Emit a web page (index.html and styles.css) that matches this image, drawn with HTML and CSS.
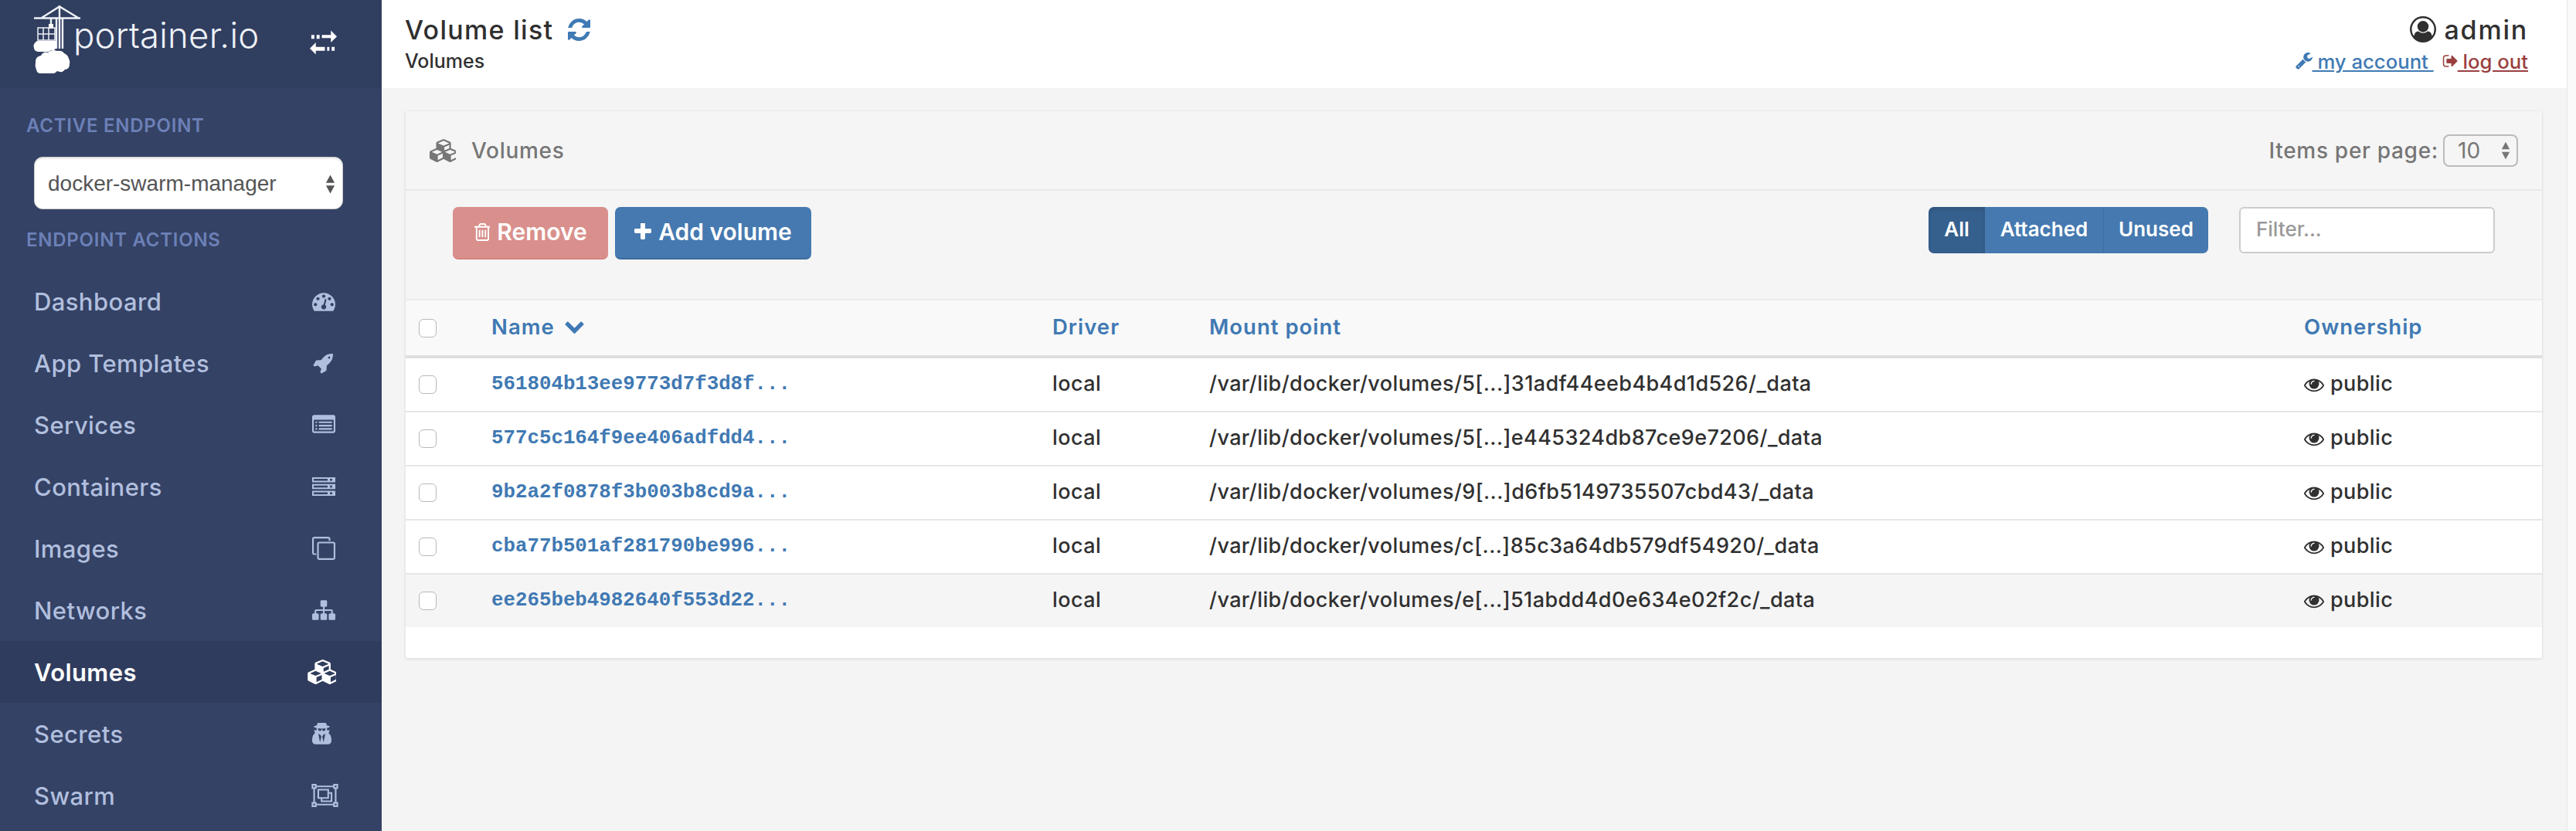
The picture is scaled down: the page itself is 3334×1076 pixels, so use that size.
FILE: index.html
```html
<!DOCTYPE html>
<html lang="en">
<head>
<meta charset="utf-8">
<title>Volume list</title>
<link rel="stylesheet" href="styles.css">
</head>
<body>
<svg class="defs" width="0" height="0" aria-hidden="true">
  <defs>
    <symbol id="i-cubes" viewBox="0 0 2048 1792"><path d="M640 1632l384-192v-314l-384 164v342zm-64-454l404-173-404-173-404 173zm1088 454l384-192v-314l-384 164v342zm-64-454l404-173-404-173-404 173zm-448-293l384-165v-266l-384 164v267zm-64-379l441-189-441-189-441 189zm1088 518v416q0 36-19 67t-52 47l-448 224q-25 14-57 14t-57-14l-448-224q-5-2-7-4-2 2-7 4l-448 224q-25 14-57 14t-57-14l-448-224q-33-16-52-47t-19-67v-416q0-38 21.5-70t56.5-48l434-186v-400q0-38 21.5-70t56.5-48l448-192q23-10 50-10t50 10l448 192q35 16 56.5 48t21.5 70v400l434 186q36 16 57 48t21 70z"/></symbol>
    <symbol id="i-eye" viewBox="0 0 1792 1792"><path d="M1664 960q-152-236-381-353 61 104 61 225 0 185-131.5 316.5t-316.5 131.5-316.5-131.5-131.5-316.5q0-121 61-225-229 117-381 353 133 205 333.5 326.5t434.5 121.5 434.5-121.5 333.5-326.5zm-720-384q0-20-14-34t-34-14q-125 0-214.5 89.5t-89.5 214.5q0 20 14 34t34 14 34-14 14-34q0-86 61-147t147-61q20 0 34-14t14-34zm848 384q0 34-20 69-140 230-376.5 368.5t-499.5 138.5-499.5-139-376.5-368q-20-35-20-69t20-69q140-229 376.5-368t499.5-139 499.5 139 376.5 368q20 35 20 69z"/></symbol>
  </defs>
</svg>
<aside class="sidebar">
  <div class="brand">
    <svg class="logo" viewBox="0 0 66 90" aria-hidden="true">
      <g class="logo-lines">
        <path d="M1 18.500h60M11 18l23-14.500L58 18M34 2v56M30 18v40M38 18v40M23 18v9"/>
        <path class="thin" d="M6 31h22v16H6zM13 31v16M20 31v16M6 39h22"/>
      </g>
      <rect class="logo-fill" x="20" y="26" width="6" height="6"/>
      <path class="logo-fill" d="M5 48h24q2 5 0 10-2 3-6 2l-3 2-14 0q-5-1-5-5-2-5 4-9z"/>
      <path class="logo-fill" d="M3 75q0-7 7-8 3-6 9-4 5-5 12-2 6-1 9 3 5 2 6 7 2 3 1 7 0 7-6 7-3 5-10 2-4 5-11 3-4 3-8 0-7 1-8-5-2-4-1-8z"/>
    </svg>
    <span class="brand-name">portainer.io</span>
    <svg class="toggle" viewBox="0 0 38 32" aria-hidden="true"><path d="M3 6h4v5H3zM10 6h4v5h-4zM17 6h12V0l8 8-8 8v-6H17zM1 24l8-8v6h12v5H9v5zM24 22h3v5h-3zM30 22h4v5h-4z"/></svg>
  </div>
  <div class="section-label section-active">ACTIVE ENDPOINT</div>
  <div class="endpoint">
    <span>docker-swarm-manager</span>
    <svg class="updown" viewBox="0 0 14 26" aria-hidden="true"><path d="M7 0l6 11H1zM7 26l-6-11h12z"/></svg>
  </div>
  <div class="section-label section-actions">ENDPOINT ACTIONS</div>
  <nav class="nav">
    <a class="nav-item"><span>Dashboard</span><svg class="nav-icon" viewBox="0 0 1792 1536"><path transform="translate(0 -128)" d="M384 1152q0-53-37.500-90.500t-90.500-37.500-90.500 37.500-37.500 90.500 37.500 90.500 90.500 37.500 90.500-37.500 37.500-90.500zm192-448q0-53-37.500-90.500t-90.500-37.500-90.500 37.500-37.500 90.500 37.500 90.500 90.500 37.500 90.500-37.500 37.500-90.500zm428 481l101-382q6-26-7.500-48.500t-38.500-29.500-48 6.500-30 39.500l-101 382q-60 5-107 43.500t-63 98.500q-20 77 20 146t117 89 146-20 89-117q16-60-6-117t-72-91zm660-33q0-53-37.500-90.500t-90.500-37.500-90.500 37.500-37.500 90.500 37.500 90.500 90.500 37.500 90.500-37.500 37.500-90.500zm-640-640q0-53-37.500-90.500t-90.500-37.500-90.500 37.500-37.500 90.500 37.500 90.500 90.500 37.500 90.500-37.500 37.500-90.500zm448 192q0-53-37.500-90.500t-90.500-37.500-90.500 37.500-37.500 90.500 37.500 90.500 90.500 37.500 90.500-37.500 37.500-90.500zm320 448q0 261-141 483-19 29-54 29h-1402q-35 0-54-29-141-221-141-483 0-182 71-348t191-286 286-191 348-71 348 71 286 191 191 286 71 348z"/></svg></a>
    <a class="nav-item"><span>App Templates</span><svg class="nav-icon icon-rocket" viewBox="0 0 1792 1792"><path d="M1504 448q0-40-28-68t-68-28-68 28-28 68 28 68 68 28 68-28 28-68zm224-288q0 249-75.500 430.500t-253.500 360.500q-81 80-195 176l-20 379q-2 16-16 26l-384 224q-7 4-16 4-12 0-23-9l-64-64q-13-14-8-32l85-276-281-281-276 85q-3 1-9 1-14 0-23-9l-64-64q-17-19-5-39l224-384q10-14 26-16l379-20q96-114 176-195 188-187 358-258t431-71q14 0 24 9.500t10 22.500z"/></svg></a>
    <a class="nav-item"><span>Services</span><svg class="nav-icon" viewBox="0 0 1792 1408"><path transform="translate(0 -192)" d="M384 1184v64q0 13-9.500 22.500t-22.500 9.500h-64q-13 0-22.500-9.500t-9.500-22.500v-64q0-13 9.500-22.500t22.500-9.500h64q13 0 22.500 9.500t9.500 22.500zm0-256v64q0 13-9.500 22.500t-22.500 9.500h-64q-13 0-22.500-9.500t-9.500-22.500v-64q0-13 9.500-22.500t22.500-9.500h64q13 0 22.500 9.500t9.500 22.500zm0-256v64q0 13-9.500 22.500t-22.500 9.500h-64q-13 0-22.500-9.500t-9.500-22.500v-64q0-13 9.500-22.500t22.500-9.500h64q13 0 22.500 9.500t9.500 22.500zm1152 512v64q0 13-9.500 22.500t-22.500 9.500h-960q-13 0-22.500-9.500t-9.500-22.500v-64q0-13 9.500-22.500t22.500-9.500h960q13 0 22.500 9.500t9.500 22.500zm0-256v64q0 13-9.500 22.500t-22.500 9.500h-960q-13 0-22.500-9.500t-9.500-22.500v-64q0-13 9.500-22.500t22.500-9.500h960q13 0 22.500 9.500t9.500 22.500zm0-256v64q0 13-9.500 22.500t-22.500 9.500h-960q-13 0-22.500-9.500t-9.500-22.500v-64q0-13 9.500-22.500t22.500-9.500h960q13 0 22.500 9.500t9.500 22.500zm128 704v-832q0-13-9.500-22.500t-22.500-9.500h-1472q-13 0-22.500 9.500t-9.500 22.500v832q0 13 9.500 22.500t22.500 9.500h1472q13 0 22.500-9.500t9.500-22.500zm128-1088v1088q0 66-47 113t-113 47h-1472q-66 0-113-47t-47-113v-1088q0-66 47-113t113-47h1472q66 0 113 47t47 113z"/></svg></a>
    <a class="nav-item"><span>Containers</span><svg class="nav-icon icon-server" viewBox="0 0 30 24"><path fill-rule="evenodd" d="M0 0h30v6.500H0zM2 2v2.500h18V2zM23 2v2.500h3V2zM0 8.750h30v6.500H0zM2 10.750v2.500h18v-2.500zM23 10.750v2.500h3v-2.500zM0 17.500h30V24H0zM2 19.500V22h18v-2.500zM23 19.500V22h3v-2.500z"/></svg></a>
    <a class="nav-item"><span>Images</span><svg class="nav-icon icon-clone" viewBox="0 0 1792 1792"><path d="M1664 1632v-1088q0-13-9.500-22.500t-22.500-9.500h-1088q-13 0-22.500 9.500t-9.500 22.500v1088q0 13 9.500 22.500t22.500 9.500h1088q13 0 22.500-9.500t9.500-22.500zm128-1088v1088q0 66-47 113t-113 47h-1088q-66 0-113-47t-47-113v-1088q0-66 47-113t113-47h1088q66 0 113 47t47 113zm-384-384v160h-128v-160q0-13-9.500-22.500t-22.500-9.500h-1088q-13 0-22.500 9.500t-9.500 22.500v1088q0 13 9.500 22.500t22.500 9.500h160v128h-160q-66 0-113-47t-47-113v-1088q0-66 47-113t113-47h1088q66 0 113 47t47 113z"/></svg></a>
    <a class="nav-item"><span>Networks</span><svg class="nav-icon" viewBox="0 0 1792 1536"><path transform="translate(0 -128)" d="M1792 1248v320q0 40-28 68t-68 28h-320q-40 0-68-28t-28-68v-320q0-40 28-68t68-28h96v-192h-512v192h96q40 0 68 28t28 68v320q0 40-28 68t-68 28h-320q-40 0-68-28t-28-68v-320q0-40 28-68t68-28h96v-192h-512v192h96q40 0 68 28t28 68v320q0 40-28 68t-68 28h-320q-40 0-68-28t-28-68v-320q0-40 28-68t68-28h96v-192q0-52 38-90t90-38h512v-192h-96q-40 0-68-28t-28-68v-320q0-40 28-68t68-28h320q40 0 68 28t28 68v320q0 40-28 68t-68 28h-96v192h512q52 0 90 38t38 90v192h96q40 0 68 28t28 68z"/></svg></a>
    <a class="nav-item nav-active"><span>Volumes</span><svg class="nav-icon icon-cubes"><use href="#i-cubes"/></svg></a>
    <a class="nav-item"><span>Secrets</span><svg class="nav-icon icon-secret" viewBox="0 128 1408 1536"><path d="M576 1536l96-448-96-128-128-64zm256 0l128-640-128 64-96 128zm160-1010q-2-4-4-6-10-8-96-8-70 0-167 19-7 2-21 2t-21-2q-97-19-167-19-86 0-96 8-2 2-4 6 2 18 4 27 2 3 7.500 6.500t7.500 10.500q2 4 7.500 20.500t7 20.500 7.500 17 8.500 17 9 14 12 13.500 14 9.500 17.500 8 20.500 4 24.500 2q36 0 59-12.500t32.500-30 14.500-34.500 11.500-29.500 17.500-12.500h12q11 0 17.500 12.500t11.500 29.500 14.500 34.500 32.500 30 59 12.500q13 0 24.500-2t20.500-4 17.500-8 14-9.500 12-13.500 9-14 8.500-17 7.500-17 7-20.500 7.500-20.500q2-7 7.500-10.500t7.500-6.500q2-9 4-27zm416 879q0 121-73 190t-194 69h-874q-121 0-194-69t-73-190q0-61 4.500-118t19-125.500 37.500-123.500 63.500-103.500 93.500-74.500l-90-220h214q-22-64-22-128 0-12 2-32-194-40-194-96 0-57 210-99 17-62 51.500-134t70.500-114q32-37 76-37 30 0 84 31t84 31 84-31 84-31q44 0 76 36 36 42 70.500 114t51.500 135q210 42 210 99 0 56-194 96 7 81-20 160h214l-82 225q63 33 107.500 96.500t65.500 143.500 29 151.500 8 148.500z"/></svg></a>
    <a class="nav-item"><span>Swarm</span><svg class="nav-icon icon-swarm" viewBox="0 0 2048 1792"><path fill-rule="evenodd" d="M0 0h384v128h1280V0h384v384h-128v1024h128v384h-384v-128H384v128H0v-384h128V384H0zM128 128v128h128V128zM1792 128v128h128V128zM128 1536v128h128v-128zM1792 1536v128h128v-128zM384 256v128H256v1024h128v128h1280v-128h128V384h-128V256zM448 384h896v256h256v768H704v-256H448zM576 512v512h640V512zM1344 768v384H832v128h640V768z"/></svg></a>
  </nav>
</aside>
<main class="main">
  <header class="topbar">
    <div class="page-title">
      <div class="title-row">
        <span class="title">Volume list</span>
        <svg class="refresh" viewBox="128 128 1536 1536" aria-hidden="true"><path d="M1639 1056q0 5-1 7-64 268-268 434.500t-478 166.500q-146 0-282.500-55t-243.500-157l-129 129q-19 19-45 19t-45-19-19-45v-448q0-26 19-45t45-19h448q26 0 45 19t19 45-19 45l-137 137q71 66 161 102t187 36q134 0 250-65t186-179q11-17 53-117 8-23 30-23h192q13 0 22.500 9.500t9.500 22.500zm25-800v448q0 26-19 45t-45 19h-448q-26 0-45-19t-19-45 19-45l138-138q-148-137-349-137-134 0-250 65t-186 179q-11 17-53 117-8 23-30 23h-199q-13 0-22.500-9.500t-9.500-22.500v-7q65-268 270-434.500t480-166.500q146 0 284 55.500t245 156.500l130-129q19-19 45-19t45 19 19 45z"/></svg>
      </div>
      <div class="crumb">Volumes</div>
    </div>
    <div class="user">
      <div class="user-name">
        <svg class="user-icon" viewBox="0 0 1792 1792" aria-hidden="true"><path d="M896 0q182 0 348 71t286 191 191 286 71 348q0 181-70.500 347t-190.500 286-286 191.500-349 71.500-349-71-285.500-191.500-190.500-286-71-347.500 71-348 191-286 286-191 348-71zm619 1351q149-205 149-455 0-156-61-298t-164-245-245-164-298-61-298 61-245 164-164 245-61 298q0 250 149 455 66-327 306-327 131 128 313 128t313-128q240 0 306 327zm-235-647q0-159-112.500-271.500t-271.500-112.500-271.500 112.500-112.500 271.500 112.500 271.500 271.500 112.500 271.500-112.500 112.500-271.500z"/></svg>
        <span>admin</span>
      </div>
      <div class="user-links">
        <svg class="wrench" viewBox="64 128 1664 1664" aria-hidden="true"><path d="M448 1472q0-26-19-45t-45-19-45 19-19 45 19 45 45 19 45-19 19-45zm644-420l-682 682q-37 37-90 37-52 0-91-37l-106-108q-38-36-38-90 0-53 38-91l681-681q39 98 114.500 173.500t173.500 114.500zm634-435q0 39-23 106-47 134-164.500 217.500t-258.500 83.500q-185 0-316.500-131.500t-131.500-316.500 131.500-316.500 316.500-131.500q58 0 121.500 16.500t107.500 46.500q16 11 16 28t-16 28l-293 169v224l193 107q5-3 79-48.500t135.500-81 70.500-35.500q15 0 23.500 10t8.500 25z"/></svg>
        <a class="link-account">&nbsp;my account&nbsp;</a>
        <svg class="signout" viewBox="0 256 1664 1280" aria-hidden="true"><path d="M704 1440q0 4 1 20t.5 26.500-3 23.500-10 19.500-20.500 6.500h-320q-119 0-203.500-84.500t-84.500-203.500v-704q0-119 84.500-203.500t203.500-84.500h320q13 0 22.500 9.500t9.500 22.500q0 4 1 20t.5 26.500-3 23.500-10 19.500-20.500 6.500h-320q-66 0-113 47t-47 113v704q0 66 47 113t113 47h312l11.500 1 11.500 3 8 5.500 7 9 2 13.500zm928-544q0 26-19 45l-544 544q-19 19-45 19t-45-19-19-45v-288h-448q-26 0-45-19t-19-45v-384q0-26 19-45t45-19h448v-288q0-26 19-45t45-19 45 19l544 544q19 19 19 45z"/></svg>
        <a class="link-logout">&nbsp;log out</a>
      </div>
    </div>
  </header>
  <section class="content">
    <div class="panel">
      <div class="panel-head">
        <svg class="panel-icon"><use href="#i-cubes"/></svg>
        <span class="panel-title">Volumes</span>
        <span class="items-label">Items per page:</span>
        <div class="items-select"><span>10</span><svg class="updown-small" viewBox="0 0 14 26" aria-hidden="true"><path d="M7 0l6 11H1zM7 26l-6-11h12z"/></svg></div>
      </div>
      <div class="toolbar">
        <button class="btn btn-remove" type="button"><svg class="btn-icon-trash" viewBox="128 128 1408 1536" aria-hidden="true"><path d="M704 736v576q0 14-9 23t-23 9h-64q-14 0-23-9t-9-23v-576q0-14 9-23t23-9h64q14 0 23 9t9 23zm256 0v576q0 14-9 23t-23 9h-64q-14 0-23-9t-9-23v-576q0-14 9-23t23-9h64q14 0 23 9t9 23zm256 0v576q0 14-9 23t-23 9h-64q-14 0-23-9t-9-23v-576q0-14 9-23t23-9h64q14 0 23 9t9 23zm128 724v-948h-896v948q0 22 7 40.500t14.500 27 10.500 8.500h832q3 0 10.500-8.500t14.500-27 7-40.500zm-672-1076h448l-48-117q-7-9-17-11h-317q-10 2-17 11zm928 32v64q0 14-9 23t-23 9h-96v948q0 83-47 143.500t-113 60.500h-832q-66 0-113-58.500t-47-141.500v-952h-96q-14 0-23-9t-9-23v-64q0-14 9-23t23-9h309l70-167q15-37 54-63t79-26h320q40 0 79 26t54 63l70 167h309q14 0 23 9t9 23z"/></svg>Remove</button>
        <button class="btn btn-add" type="button"><svg class="btn-icon-plus" viewBox="192 192 1408 1408" aria-hidden="true"><path d="M1600 736v192q0 40-28 68t-68 28h-416v416q0 40-28 68t-68 28h-192q-40 0-68-28t-28-68v-416h-416q-40 0-68-28t-28-68v-192q0-40 28-68t68-28h416v-416q0-40 28-68t68-28h192q40 0 68 28t28 68v416h416q40 0 68 28t28 68z"/></svg>Add volume</button>
        <div class="btn-group">
          <button class="seg seg-all" type="button">All</button>
          <button class="seg seg-attached" type="button">Attached</button>
          <button class="seg seg-unused" type="button">Unused</button>
        </div>
        <input class="filter" type="text" placeholder="Filter...">
      </div>
      <table class="table">
        <thead>
          <tr>
            <th class="col-check"><input class="check" type="checkbox"></th>
            <th class="col-name">Name <svg class="chevron" viewBox="64 448 1664 1120" aria-hidden="true"><path d="M1683 808l-742 741q-19 19-45 19t-45-19l-742-741q-19-19-19-45.500t19-45.500l166-165q19-19 45-19t45 19l531 531 531-531q19-19 45-19t45 19l166 165q19 19 19 45.500t-19 45.500z"/></svg></th>
            <th class="col-driver">Driver</th>
            <th class="col-mount">Mount point</th>
            <th class="col-owner">Ownership</th>
          </tr>
        </thead>
        <tbody>
          <tr>
            <td class="cell-check"><input class="check" type="checkbox"></td>
            <td class="vol-name">561804b13ee9773d7f3d8f...</td>
            <td>local</td>
            <td>/var/lib/docker/volumes/5[...]31adf44eeb4b4d1d526/_data</td>
            <td><svg class="eye"><use href="#i-eye"/></svg>public</td>
          </tr>
          <tr>
            <td class="cell-check"><input class="check" type="checkbox"></td>
            <td class="vol-name">577c5c164f9ee406adfdd4...</td>
            <td>local</td>
            <td>/var/lib/docker/volumes/5[...]e445324db87ce9e7206/_data</td>
            <td><svg class="eye"><use href="#i-eye"/></svg>public</td>
          </tr>
          <tr>
            <td class="cell-check"><input class="check" type="checkbox"></td>
            <td class="vol-name">9b2a2f0878f3b003b8cd9a...</td>
            <td>local</td>
            <td>/var/lib/docker/volumes/9[...]d6fb5149735507cbd43/_data</td>
            <td><svg class="eye"><use href="#i-eye"/></svg>public</td>
          </tr>
          <tr>
            <td class="cell-check"><input class="check" type="checkbox"></td>
            <td class="vol-name">cba77b501af281790be996...</td>
            <td>local</td>
            <td>/var/lib/docker/volumes/c[...]85c3a64db579df54920/_data</td>
            <td><svg class="eye"><use href="#i-eye"/></svg>public</td>
          </tr>
          <tr class="row-hover">
            <td class="cell-check"><input class="check" type="checkbox"></td>
            <td class="vol-name">ee265beb4982640f553d22...</td>
            <td>local</td>
            <td>/var/lib/docker/volumes/e[...]51abdd4d0e634e02f2c/_data</td>
            <td><svg class="eye"><use href="#i-eye"/></svg>public</td>
          </tr>
        </tbody>
      </table>
      <div class="panel-foot"></div>
    </div>
  </section>
</main>
<div class="scroll-strip"></div>
</body>
</html>
```
FILE: styles.css
```css
* { box-sizing: border-box; }
html, body { height: 100%; }
body {
  margin: 0;
  display: flex;
  height: 1076px;
  overflow: hidden;
  font-family: Inter, "Noto Sans", sans-serif;
  font-size: 26px;
  color: #303030;
  background: #f4f4f4;
}
.defs { position: absolute; }
svg { fill: currentColor; display: block; flex: none; }

/* sidebar */
.sidebar {
  width: 494px;
  flex: none;
  background: #344265;
  display: flex;
  flex-direction: column;
}
.brand {
  height: 114px;
  flex: none;
  background: #303e60;
  display: flex;
  align-items: flex-start;
  padding-left: 43px;
  color: #fff;
}
.logo { width: 66px; height: 90px; margin-top: 5px; }
.logo-lines { fill: none; stroke: #eef1f6; stroke-width: 2.400; }
.logo-lines .thin { stroke-width: 1.500; }
.logo-fill { fill: #fff; }
.brand-name {
  margin-left: -14px;
  margin-top: 16px;
  font-size: 45.500px;
  line-height: 60px;
  font-weight: 300;
  letter-spacing: 0.2px;
  color: #eef1f6;
}
.toggle { width: 37px; height: 32px; margin-left: auto; margin-right: 57px; margin-top: 39px; }
.section-label {
  padding-left: 34px;
  font-size: 24px;
  font-weight: 600;
  line-height: 30px;
  letter-spacing: .75px;
  color: #6c80b7;
}
.section-active { margin-top: 34px; }
.section-actions { margin-top: 25px; }
.endpoint {
  margin: 25px 50px 0 44px;
  height: 68px;
  background: #fff;
  border-radius: 11px;
  border: 1px solid #ccc;
  box-shadow: inset 0 2px 2px rgba(0,0,0,.08);
  display: flex;
  align-items: center;
  justify-content: space-between;
  padding: 2px 9px 0 17px;
  color: #555;
  font-family: "Liberation Sans", Arial, sans-serif;
  font-size: 28px;
}
.updown { width: 13px; height: 25px; color: #555; }
.nav { margin-top: 24px; display: flex; flex-direction: column; }
.nav-item {
  height: 80px;
  flex: none;
  display: flex;
  align-items: center;
  justify-content: space-between;
  padding: 0 60px 0 44px;
  font-size: 31px;
  font-weight: 500;
  letter-spacing: .4px;
  color: #b1bfde;
}
.nav-active { background: #2f3c5e; color: #fff; font-weight: 600; }
.nav-icon { width: 30px; height: 26px; }
.icon-server { height: 24px; }
.icon-clone { height: 30px; }
.icon-rocket { height: 28px; width: 28px; margin-right: 2px; }
.icon-cubes { width: 37px; height: 32px; margin-right: -1px; }
.icon-secret { width: 25px; height: 28px; margin-right: 5px; }
.icon-swarm { width: 35px; height: 30px; margin-right: -4px; }

/* main */
.main { flex: 1; min-width: 0; display: flex; flex-direction: column; }
.scroll-strip { width: 12px; flex: none; background: #fafafa; border-left: 1px solid #e8e8e8; }
.topbar {
  height: 114px;
  flex: none;
  background: #fff;
  display: flex;
  justify-content: space-between;
  padding: 0 50px 0 30px;
}
.title-row { display: flex; align-items: center; margin-top: 20px; height: 36px; }
.title { font-size: 34px; font-weight: 500; letter-spacing: 1.300px; color: #2f2f2f; }
.refresh { width: 29px; height: 29px; margin-left: 19px; color: #3f7ab4; }
.crumb { font-size: 25px; font-weight: 500; line-height: 30px; margin-top: 8px; color: #303030; }
.user { display: flex; flex-direction: column; align-items: flex-end; }
.user-name { display: flex; align-items: center; gap: 10px; margin-top: 20px; height: 36px; font-size: 34px; font-weight: 500; letter-spacing: 1.800px; }
.user-icon { width: 34px; height: 34px; }
.user-links { display: flex; align-items: center; margin-top: 8px; height: 30px; font-size: 25.700px; font-weight: 500; }
.wrench { width: 22px; height: 22px; color: #3f7ab4; }
.link-account { color: #3f7ab4; text-decoration: underline; }
.signout { width: 20px; height: 18px; margin-left: 11px; color: #9a3f3f; }
.link-logout { color: #9a3f3f; text-decoration: underline; }

.content { flex: 1; padding: 30px 32px 0 31px; }
.panel {
  background: #fff;
  border-radius: 3px;
  box-shadow: 0 1px 4px rgba(0,0,0,.12);
}
.panel-head {
  height: 103px;
  background: #f5f5f5;
  border-bottom: 2px solid #e8e8e8;
  display: flex;
  align-items: center;
  padding: 0 31px;
}
.panel-icon { width: 34px; height: 30px; color: #767676; }
.panel-title { margin-left: 20px; font-size: 28px; font-weight: 500; letter-spacing: .7px; color: #767676; }
.items-label { margin-left: auto; font-size: 28px; font-weight: 500; letter-spacing: .7px; color: #767676; }
.items-select {
  margin-left: 6px;
  width: 97px;
  height: 42px;
  border: 2px solid #bbb;
  border-radius: 8px;
  display: flex;
  align-items: center;
  justify-content: space-between;
  padding: 0 8px 0 17px;
  color: #767676;
  font-size: 28px;
}
.updown-small { width: 12px; height: 26px; color: #777; }
.toolbar {
  height: 140px;
  background: #f5f5f5;
  display: flex;
  align-items: flex-start;
  padding: 21px 61px 0;
}
.btn {
  height: 68px;
  border: 0;
  border-radius: 7px;
  display: flex;
  align-items: center;
  justify-content: center;
  font-family: inherit;
  font-size: 30px;
  font-weight: 600;
  color: #fff;
  padding: 0 0 2px;
}
.btn-remove { width: 201px; background: #d9908c; border-bottom: 2px solid #d38380; }
.btn-add { width: 254px; margin-left: 9px; background: #4579b0; border-bottom: 2px solid #3c6c9f; }
.btn-icon-trash { width: 21px; height: 25px; margin-right: 9px; }
.btn-icon-plus { width: 22px; height: 22px; margin-right: 9px; }
.btn-group { margin-left: auto; display: flex; height: 60px; }
.seg {
  border: 0;
  height: 60px;
  background: #4579b0;
  color: #fff;
  font-family: inherit;
  font-size: 26px;
  font-weight: 600;
  padding: 0 0 3px;
}
.seg-all { width: 73px; background: #355f8d; border-radius: 7px 0 0 7px; box-shadow: inset 0 3px 5px rgba(0,0,0,.12); }
.seg-attached { width: 154px; border-right: 1px solid #3d6d9f; }
.seg-unused { width: 135px; border-radius: 0 7px 7px 0; }
.filter {
  margin-left: 40px;
  width: 331px;
  height: 60px;
  background: #fff;
  border: 2px solid #ccc;
  border-radius: 6px;
  padding: 0 20px 3px;
  font-family: inherit;
  font-size: 26px;
  font-weight: 500;
}
.filter::placeholder { color: #999; opacity: 1; }

.table { width: 100%; border-collapse: separate; border-spacing: 0; table-layout: fixed; }
.table th {
  height: 77px;
  background: #f9f9f9;
  border-top: 2px solid #ececec;
  border-bottom: 4px solid #dedede;
  padding: 0 0 4px;
  text-align: left;
  font-size: 27.500px;
  font-weight: 600;
  letter-spacing: 1px;
  color: #4079b3;
}
.table td {
  height: 70px;
  background: #fff;
  border-bottom: 2px solid #e6e6e6;
  padding: 0 0 3px;
  font-size: 27px;
  font-weight: 500;
  letter-spacing: .4px;
}
.table .row-hover td { background: #f5f5f5; border-bottom: 0; height: 68px; }
.table th.col-check { width: 111px; padding: 0 0 0 17px; }
.table td.cell-check { padding: 0 0 0 17px; }
.col-name { width: 726px; }
.col-driver { width: 203px; }
.col-mount { width: 1417px; }
.chevron { display: inline-block; width: 25px; height: 17px; margin: 0 0 4px 5px; vertical-align: middle; }
.check {
  appearance: none;
  display: block;
  margin: 0;
  width: 23px;
  height: 24px;
  background: #fff;
  border: 1.500px solid #b8b8b8;
  border-radius: 6px;
}
.table td.vol-name {
  font-family: "Liberation Mono", "Courier New", monospace;
  font-size: 25.800px;
  font-weight: 700;
  letter-spacing: 0;
  padding-bottom: 1px;
  color: #4079b3;
}
.eye { display: inline-block; width: 26px; height: 26px; margin-right: 8px; vertical-align: -5px; }
.panel-foot { height: 40px; }
```
